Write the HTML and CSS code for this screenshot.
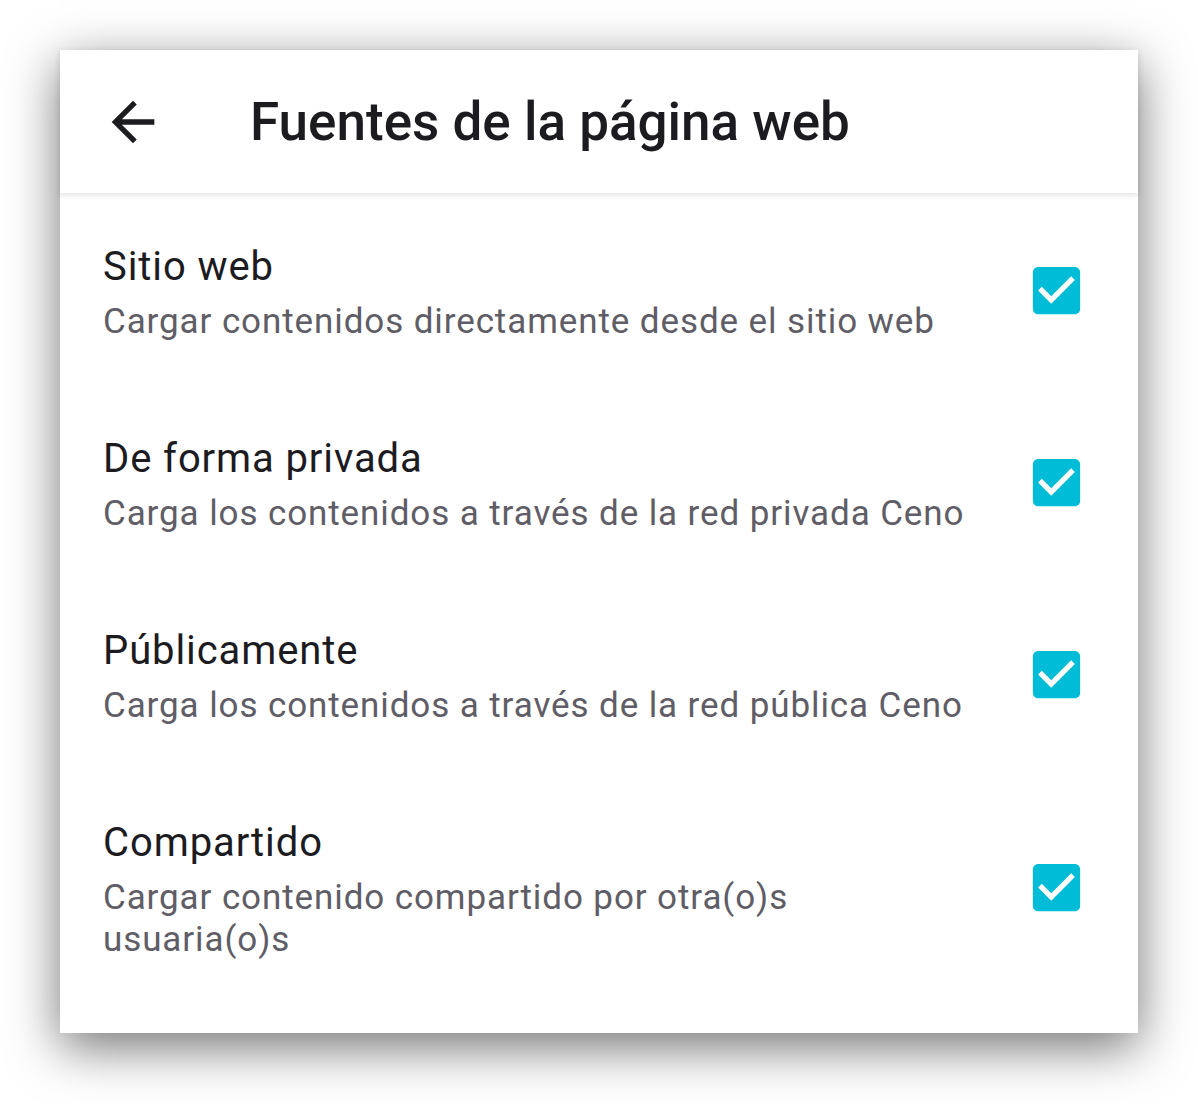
FILE: index.html
```html
<!DOCTYPE html>
<html lang="es">
<head>
<meta charset="utf-8">
<title>Fuentes de la página web</title>
<link rel="stylesheet" href="styles.css">
</head>
<body>
<div class="card">
  <header class="appbar">
    <svg class="back" viewBox="0 0 24 24" aria-hidden="true"><path d="M20 11H7.83l5.59-5.59L12 4l-8 8 8 8 1.41-1.41L7.83 13H20v-2z"/></svg>
    <h1 class="title">Fuentes de la página web</h1>
  </header>
  <main class="list">
    <div class="row">
      <div class="text">
        <div class="primary">Sitio web</div>
        <div class="secondary">Cargar contenidos directamente desde el sitio web</div>
      </div>
      <svg class="check" viewBox="0 0 24 24" aria-hidden="true"><path d="M19 3H5c-1.11 0-2 .9-2 2v14c0 1.1.89 2 2 2h14c1.11 0 2-.9 2-2V5c0-1.1-.89-2-2-2zm-9 14l-5-5 1.41-1.41L10 14.17l7.59-7.59L19 8l-9 9z"/></svg>
    </div>
    <div class="row">
      <div class="text">
        <div class="primary">De forma privada</div>
        <div class="secondary">Carga los contenidos a través de la red privada Ceno</div>
      </div>
      <svg class="check" viewBox="0 0 24 24" aria-hidden="true"><path d="M19 3H5c-1.11 0-2 .9-2 2v14c0 1.1.89 2 2 2h14c1.11 0 2-.9 2-2V5c0-1.1-.89-2-2-2zm-9 14l-5-5 1.41-1.41L10 14.17l7.59-7.59L19 8l-9 9z"/></svg>
    </div>
    <div class="row">
      <div class="text">
        <div class="primary">Públicamente</div>
        <div class="secondary">Carga los contenidos a través de la red pública Ceno</div>
      </div>
      <svg class="check" viewBox="0 0 24 24" aria-hidden="true"><path d="M19 3H5c-1.11 0-2 .9-2 2v14c0 1.1.89 2 2 2h14c1.11 0 2-.9 2-2V5c0-1.1-.89-2-2-2zm-9 14l-5-5 1.41-1.41L10 14.17l7.59-7.59L19 8l-9 9z"/></svg>
    </div>
    <div class="row">
      <div class="text">
        <div class="primary">Compartido</div>
        <div class="secondary">Cargar contenido compartido por otra(o)s usuaria(o)s</div>
      </div>
      <svg class="check" viewBox="0 0 24 24" aria-hidden="true"><path d="M19 3H5c-1.11 0-2 .9-2 2v14c0 1.1.89 2 2 2h14c1.11 0 2-.9 2-2V5c0-1.1-.89-2-2-2zm-9 14l-5-5 1.41-1.41L10 14.17l7.59-7.59L19 8l-9 9z"/></svg>
    </div>
  </main>
</div>
</body>
</html>
```
FILE: styles.css
```css
html, body {
  margin: 0;
  padding: 0;
  background: #ffffff;
}
body {
  font-family: Roboto, "Noto Sans", sans-serif;
  width: 1198px;
  height: 1104px;
  overflow: hidden;
}
.card {
  margin: 50px 60px 0 60px;
  width: 1078px;
  height: 983px;
  background: #ffffff;
  box-shadow: 0 14px 48px rgba(0, 0, 0, 0.55);
  display: flex;
  flex-direction: column;
}
.appbar {
  height: 143px;
  display: flex;
  align-items: center;
  padding-left: 41px;
  box-shadow: 0 2px 6px rgba(0, 0, 0, 0.12);
  position: relative;
  z-index: 1;
}
.back {
  width: 64px;
  height: 64px;
  fill: #1c1b1f;
  flex: none;
}
.title {
  margin: 0 0 0 85px;
  font-size: 53px;
  font-weight: 500;
  color: #1c1b1f;
  letter-spacing: 0;
}
.list {
  display: flex;
  flex-direction: column;
}
.row {
  display: flex;
  align-items: center;
  gap: 50px;
  padding: 50px 50px 42px 43px;
}
.text {
  flex: 1;
}
.primary {
  font-size: 40px;
  line-height: 48px;
  color: #1c1b1f;
  letter-spacing: 0.9px;
}
.secondary {
  margin-top: 10px;
  font-size: 35px;
  line-height: 42px;
  color: #5f5d66;
  letter-spacing: 0.9px;
}
.check {
  width: 63px;
  height: 63px;
  margin-bottom: 6px;
  fill: #00bcd6;
  flex: none;
}
```
